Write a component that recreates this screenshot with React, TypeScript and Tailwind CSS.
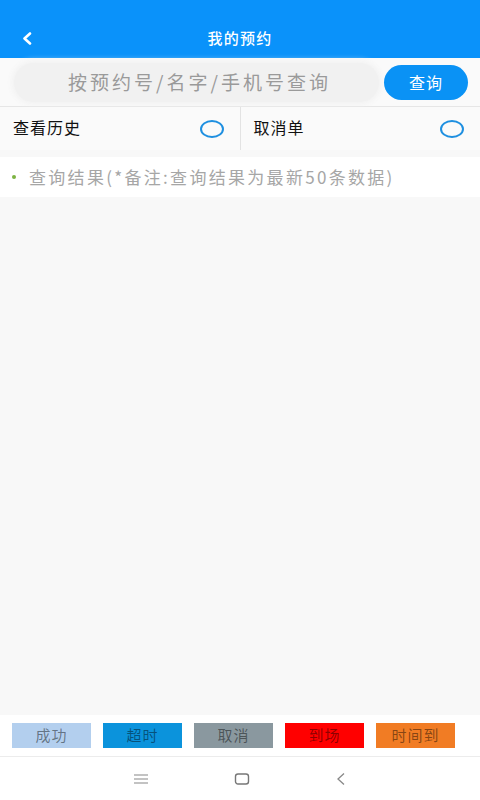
import React from "react"

const legend = [
  { name: "成功", className: "bg-[#b3cfee]" },
  { name: "超时", className: "bg-[#0b93dc]" },
  { name: "取消", className: "bg-[#8a989f]" },
  { name: "到场", className: "bg-[#ff0000]" },
  { name: "时间到", className: "bg-[#f17c24]" },
]

const font = { fontFamily: '"Noto Sans CJK SC", "Noto Sans", sans-serif' }

const Toggle: React.FC<{ label: string; bordered?: boolean }> = ({ label, bordered }) => (
  <div
    className={`flex flex-1 items-center justify-between pl-[13px] pr-4 ${
      bordered ? "border-r border-[#e3e3e3]" : ""
    }`}
  >
    <span className="-mt-[4px] text-[16px] tracking-[1px] text-[#111]">{label}</span>
    <span className="h-[18px] w-[24px] rounded-[50%] border-2 border-[#1e8fe0]" />
  </div>
)

export default function App() {
  return (
    <div className="flex h-[800px] w-[480px] flex-col bg-[#f8f8f8]" style={font}>
      {/* header */}
      <header className="flex h-[58px] shrink-0 items-end bg-[#0a92fa] pb-[9px]">
        <div className="relative flex h-[22px] w-full items-center justify-center">
          <svg
            className="absolute left-[21px] top-[5px]"
            width="12"
            height="13"
            viewBox="0 0 12 13"
            fill="none"
          >
            <path d="M9 1.5L3.5 6.5L9 11.5" stroke="white" strokeWidth="2.6" strokeLinecap="round" strokeLinejoin="round" />
          </svg>
          <span className="text-[15px] tracking-[1.3px] font-medium text-white">我的预约</span>
        </div>
      </header>

      {/* search */}
      <div className="flex h-[49px] shrink-0 items-center gap-1 border-b border-[#e6e6e6] bg-[#fafafa] pl-[14px] pr-[12px]">
        <div className="flex h-[39px] flex-1 items-center rounded-full bg-[#f1f1f1] pl-[54px] shadow-[0_0_6px_2px_#f1f1f1]">
          <span className="text-[19px] tracking-[3px] text-[#9a9a9a]">按预约号/名字/手机号查询</span>
        </div>
        <button className="ml-[1px] flex h-[35px] w-[84px] items-center justify-center rounded-full bg-[#0a92f5] text-[16px] tracking-[1px] text-white">
          查询
        </button>
      </div>

      {/* toggles */}
      <div className="flex h-[43px] shrink-0 bg-[#fafafa]">
        <Toggle label="查看历史" bordered />
        <Toggle label="取消单" />
      </div>

      {/* result title */}
      <div className="mt-[7px] flex h-[40px] shrink-0 items-center gap-[13px] bg-white pl-[12px]">
        <span className="h-[4px] w-[4px] rounded-full bg-[#7cb342]" />
        <span className="-mt-[1px] text-[17px] tracking-[2.3px] text-[#a6a6a6]">查询结果(*备注:查询结果为最新50条数据)</span>
      </div>

      <div className="flex-1" />

      {/* legend */}
      <div className="flex h-[42px] shrink-0 items-center gap-[12px] border-b border-[#ececec] bg-white pl-[12px]">
        {legend.map((l) => (
          <div
            key={l.name}
            className={`flex h-[25px] w-[79px] items-center justify-center text-[15px] tracking-[1px] text-black/45 ${l.className}`}
          >
            {l.name}
          </div>
        ))}
      </div>

      {/* system nav */}
      <div className="flex h-[43px] shrink-0 items-center justify-center gap-[85px] bg-white">
        <svg width="16" height="12" viewBox="0 0 16 12" fill="none" stroke="#888" strokeWidth="1.2">
          <path d="M1 2h14M1 6h14M1 10h14" />
        </svg>
        <svg width="16" height="14" viewBox="0 0 16 14" fill="none" stroke="#777" strokeWidth="1.4">
          <rect x="1.5" y="2" width="13" height="10" rx="2.5" />
        </svg>
        <svg width="12" height="14" viewBox="0 0 12 14" fill="none" stroke="#888" strokeWidth="1.3">
          <path d="M9 1.5L3 7l6 5.5" />
        </svg>
      </div>
    </div>
  )
}
